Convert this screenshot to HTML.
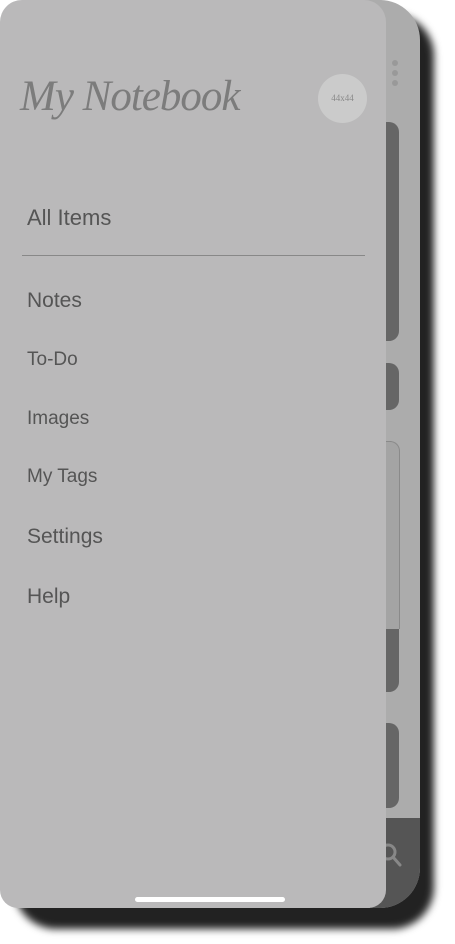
<!DOCTYPE html>
<html><head><style>
html,body{margin:0;padding:0;background:#fff;width:455px;height:944px;overflow:hidden;position:relative;font-family:"Liberation Sans",sans-serif}
.shadow{position:absolute;left:14px;top:14px;width:420px;height:915px;background:#222;border-radius:42px;filter:blur(4px)}
.phone{position:absolute;left:0;top:0;width:420px;height:908px;background:#acacac;border-radius:40px;overflow:hidden}
.card{position:absolute;left:370px;width:29px;background:#666;border-radius:10px}
.bottom{position:absolute;left:370px;top:818px;width:60px;height:100px;background:#555;border-top-left-radius:14px}
.drawer{position:absolute;left:0;top:0;width:386px;height:908px;background:#bab9ba;border-radius:22px 22px 18px 18px}
.title{position:absolute;left:20px;top:72px;font-family:"Liberation Serif",serif;font-style:italic;font-size:43px;color:#7c7c7c;letter-spacing:-1px;white-space:nowrap}
.avatar{position:absolute;left:318px;top:74px;width:49px;height:49px;border-radius:50%;background:#cbcbcb;font-family:"Liberation Serif",serif;font-size:9px;color:#8a8a8a;text-align:center;line-height:49px}
.item{position:absolute;left:27px;color:#555;white-space:nowrap}
.div{position:absolute;left:22px;top:255px;width:343px;height:1px;background:#888}
.home{position:absolute;left:135px;top:897px;width:150px;height:5px;background:#fff;border-radius:3px}
</style></head><body>
<div class="shadow"></div>
<div class="phone">
 <div style="position:absolute;left:392px;top:60px;width:6px;height:6px;border-radius:50%;background:#999"></div>
 <div style="position:absolute;left:392px;top:70px;width:6px;height:6px;border-radius:50%;background:#999"></div>
 <div style="position:absolute;left:392px;top:80px;width:6px;height:6px;border-radius:50%;background:#999"></div>
 <div class="card" style="top:122px;height:219px"></div>
 <div class="card" style="top:363px;height:47px"></div>
 <div class="card" style="top:441px;height:251px;background:#666"></div>
 <div style="position:absolute;left:370px;top:441px;width:28px;height:187px;background:#a4a4a4;border:1px solid #8a8a8a;border-bottom:none;border-radius:10px 10px 0 0"></div>
 <div class="card" style="top:723px;height:85px"></div>
 <div class="bottom"></div>
 <svg style="position:absolute;left:378px;top:840px" width="30" height="30" viewBox="0 0 30 30"><circle cx="10" cy="12" r="7" fill="none" stroke="#888" stroke-width="3"/><line x1="15" y1="17" x2="22" y2="25" stroke="#888" stroke-width="3" stroke-linecap="round"/></svg>
</div>
<div class="drawer">
 <div class="title">My Notebook</div>
 <div class="avatar">44x44</div>
 <div class="item" style="top:205px;font-size:22px">All Items</div>
 <div class="div"></div>
 <div class="item" style="top:289px;font-size:21px">Notes</div>
 <div class="item" style="top:349px;font-size:19px">To-Do</div>
 <div class="item" style="top:408px;font-size:19px">Images</div>
 <div class="item" style="top:466px;font-size:19px">My Tags</div>
 <div class="item" style="top:525px;font-size:21px">Settings</div>
 <div class="item" style="top:585px;font-size:21px">Help</div>
</div>
<div class="home"></div>
</body></html>
